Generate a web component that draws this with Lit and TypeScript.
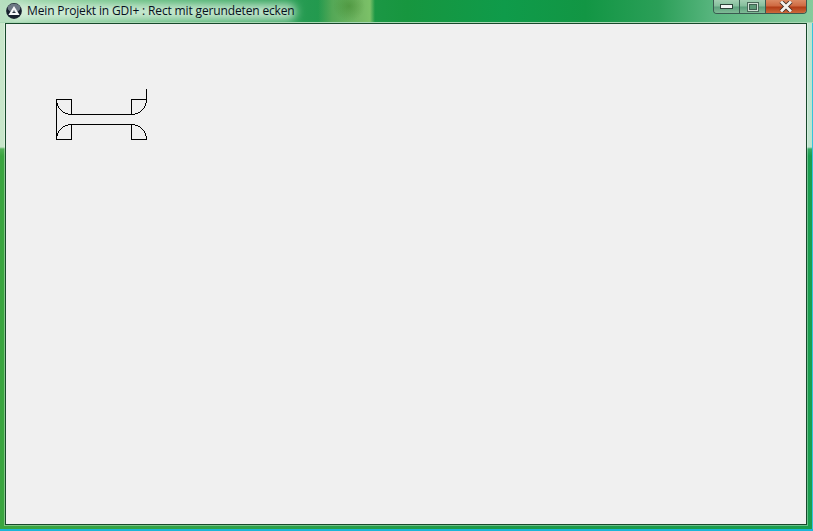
import { LitElement, html, css, svg } from "lit";
import { customElement } from "lit/decorators.js";

@customElement("app-root")
export class AppRoot extends LitElement {
  static styles = css`
    :host { display: block; width: 813px; height: 531px; overflow: hidden; }
    .window {
      box-sizing: border-box; width: 813px; height: 531px;
      display: flex; flex-direction: column; padding: 0 6px 6px 5px;
      font-family: "Open Sans", "Noto Sans", sans-serif;
      background:
        linear-gradient(to bottom, transparent 0, transparent 529px, #19b6d8 529px, #19b6d8 531px),
        linear-gradient(to left, #35c4dc 0, #35c4dc 1px, transparent 1px),
        linear-gradient(to bottom, rgba(255,255,255,.72) 0, rgba(255,255,255,.72) 147px, rgba(255,255,255,.12) 149px, rgba(255,255,255,0) 156px),
        linear-gradient(to right, #3aa53f 0, #2ea24a 30%, #1c9a48 60%, #1a9e4e 100%);
    }
    .titlebar {
      position: relative; overflow: hidden;
      height: 22px; flex: none; margin: 0 -6px 0 -5px; padding: 0 6px 0 6px;
      display: flex; align-items: flex-start;
      border-bottom: 1px solid #a8d8b4;
      background:
        radial-gradient(ellipse 16px 15px at 349px 6px, rgba(60,130,40,.5) 0, rgba(60,130,40,0) 100%),
        linear-gradient(to right, rgba(150,195,110,0) 318px, rgba(125,180,95,.55) 332px, rgba(135,190,105,.8) 358px, rgba(140,200,110,.85) 370px, rgba(140,200,110,0) 375px),
        linear-gradient(to right, #b8e0c0 0, #8fd0a0 5%, #5fba7c 18%, #3ca864 30%, #249a50 38%, #17963f 50%, #0f9b4a 62%, #129644 72%, #2b9f58 81%, #5ab680 88%, #86cb9c 100%);
    }
    .glow {
      position: absolute; left: 8px; top: 4px; width: 288px; height: 16px;
      background: #e4f4e6; opacity: .8; filter: blur(5px); border-radius: 8px;
    }
    .app-icon { position: relative; width: 16px; height: 16px; margin-top: 3px; flex: none; }
    .title {
      position: relative;
      margin: 3px 0 0 5px; font-size: 12px; letter-spacing: -0.145px; line-height: 16px; color: #06101c; white-space: nowrap;
    }
    .controls {
      position: relative;
      margin-left: auto; display: flex; height: 13px; flex: none;
      border: 1px solid #3a5a50; border-top: none; border-radius: 0 0 4px 4px; overflow: hidden;
    }
    .ctl { display: flex; align-items: center; justify-content: center; box-sizing: border-box; height: 100%; }
    .ctl + .ctl { border-left: 1px solid #3a5a50; }
    .min { width: 25px; background: linear-gradient(#a2cfb2 0, #86bf9d 45%, #5fa27e 55%, #7fbb96 100%); }
    .max { width: 26px; background: linear-gradient(#a2cfb2 0, #86bf9d 45%, #5fa27e 55%, #7fbb96 100%); }
    .close { width: 41px; background: linear-gradient(#dc8a64 0, #cf6a42 45%, #b23c16 55%, #cc6a3c 100%); }
    .client {
      flex: 1; min-height: 0; background: #f0f0f0;
      border: 1px solid #17492b; outline: 1px solid rgba(255,255,255,.35);
      padding: 64px 0 0 50px;
    }
    .client svg { display: block; }
  `;

  render() {
    return html`
      <div class="window">
        <div class="titlebar">
          <div class="glow"></div>
          <svg class="app-icon" viewBox="0 0 16 16">
            <circle cx="8" cy="8" r="7.9" fill="#18222e"/>
            <ellipse cx="8" cy="5" rx="6.4" ry="4.2" fill="#8a96a2" opacity=".75"/>
            <path d="M8 3 L13.6 12 H2.4 Z M8 6.8 L6.2 10 H9.8 Z" fill="#f6f8f9" fill-rule="evenodd"/>
          </svg>
          <span class="title">Mein Projekt in GDI+ : Rect mit gerundeten ecken</span>
          <div class="controls">
            <div class="ctl min">
              <svg width="13" height="5" viewBox="0 0 13 5"><rect x=".5" y=".5" width="12" height="4" fill="#f2f5f3" stroke="#2c4238"/></svg>
            </div>
            <div class="ctl max">
              <svg width="12" height="10" viewBox="0 0 12 10"><rect x=".5" y=".5" width="11" height="9" fill="#cfe0d5" stroke="#4a6a5a"/><rect x="2.5" y="2.5" width="7" height="5" fill="#5e9a78" stroke="#3f6050"/></svg>
            </div>
            <div class="ctl close">
              <svg width="14" height="11" viewBox="0 0 14 11"><path d="M2 0.5 L12 10.5 M12 0.5 L2 10.5" stroke="#3d2a22" stroke-width="4.4"/><path d="M2 0.5 L12 10.5 M12 0.5 L2 10.5" stroke="#f4f1ee" stroke-width="2.8"/></svg>
            </div>
          </div>
        </div>
        <div class="client">
          <svg width="100" height="60" viewBox="56 88 100 60" shape-rendering="crispEdges">
            ${svg`<path fill="none" stroke="#000" stroke-width="1"
              d="M146.5 89 V99.5 H131.5 V114.5 H71.5 V99.5 H56.5 V139.5 H71.5 V124.5 H131.5 V139.5 H146.5
                 M56.5 99.5 A15 15 0 0 0 71.5 114.5
                 M131.5 114.5 A15 15 0 0 0 146.5 99.5
                 M71.5 124.5 A15 15 0 0 0 56.5 139.5
                 M131.5 124.5 A15 15 0 0 1 146.5 139.5"/>`}
          </svg>
        </div>
      </div>
    `;
  }
}
